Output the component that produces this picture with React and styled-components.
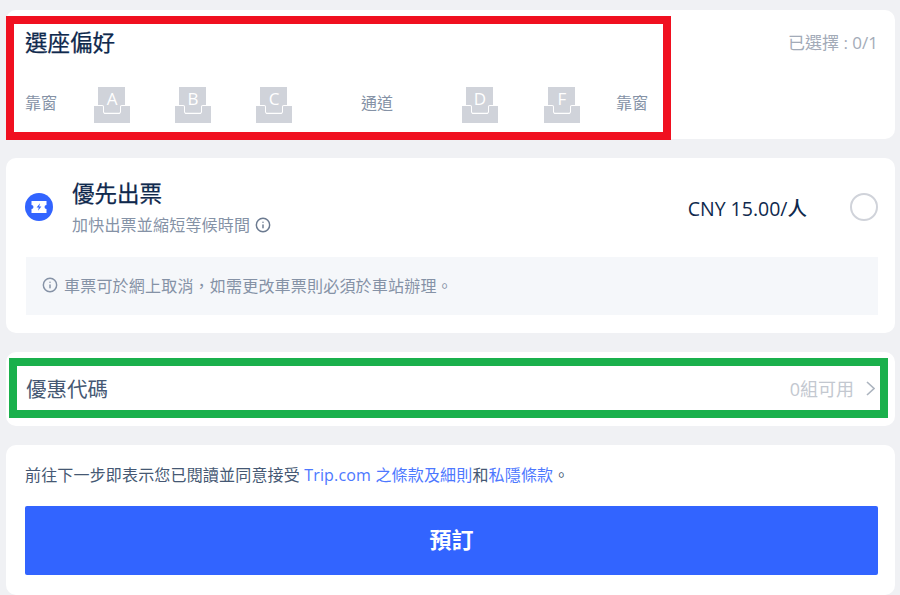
import React from 'react';
import styled, { createGlobalStyle } from 'styled-components';
import { Info } from 'lucide-react';

const GlobalStyle = createGlobalStyle`
  html, body {
    margin: 0;
    padding: 0;
    background: #f0f1f4;
  }
  body {
    font-family: "Open Sans", "Noto Sans CJK TC", sans-serif;
    color: #0f294d;
  }
`

const Page = styled.div`
  position: relative;
  width: 900px;
  height: 595px;
  overflow: hidden;
  padding: 10px 5px 0 6px;
  box-sizing: border-box;
  display: flex;
  flex-direction: column;
`

const Card = styled.section`
  background: #fff;
  border-radius: 10px;
  padding: ${p => p.$padding};
  margin-bottom: ${p => p.$gap || 0}px;
  height: ${p => p.$height}px;
  box-sizing: border-box;
  flex-shrink: 0;
`

const TitleRow = styled.div`
  display: flex;
  justify-content: space-between;
  align-items: center;
  height: 32px;
`

const Title = styled.h2`
  margin: 0;
  font-size: 22.5px;
  font-weight: 400;
  -webkit-text-stroke: 0.25px #0f294d;
  line-height: 32px;
  color: #0f294d;
`

const Counter = styled.span`
  font-size: 17px;
  color: #a3abb8;
  margin-bottom: 3px;
`

const SeatRow = styled.div`
  display: flex;
  align-items: center;
  margin-top: 28px;
  height: 36px;
`

const SeatLabel = styled.span`
  font-size: 16px;
  line-height: 32px;
  width: 32px;
  flex-shrink: 0;
  color: #8592a6;
  margin-right: ${p => p.$after || 0}px;
  margin-bottom: 4px;
`

const SeatBox = styled.div`
  position: relative;
  width: 36px;
  height: 36px;
  flex-shrink: 0;
  margin-right: ${p => p.$after || 0}px;
  svg {
    display: block;
  }
`

const SeatLetter = styled.span`
  position: absolute;
  left: 0;
  right: 0;
  top: 1px;
  text-align: center;
  font-size: 17px;
  line-height: 21px;
  color: #fff;
`

const OfferRow = styled.div`
  display: flex;
  align-items: center;
  height: 72px;
`

const TicketBadge = styled.div`
  width: 28px;
  height: 28px;
  flex-shrink: 0;
  svg {
    display: block;
  }
`

const OfferText = styled.div`
  margin-left: 19px;
  flex: 1;
`

const OfferTitle = styled.div`
  font-size: 22.5px;
  font-weight: 400;
  -webkit-text-stroke: 0.25px #0f294d;
  line-height: 32px;
  color: #0f294d;
`

const OfferSub = styled.div`
  display: flex;
  align-items: center;
  gap: 5px;
  margin-top: 3px;
  font-size: 16px;
  letter-spacing: 0.2px;
  line-height: 24px;
  color: #8592a6;
`

const Price = styled.span`
  font-size: 19.5px;
  font-weight: 500;
  color: #0f294d;
  margin-right: 43px;
`

const Radio = styled.span`
  width: 28px;
  height: 28px;
  box-sizing: border-box;
  border: 2.5px solid #d0d3da;
  border-radius: 50%;
  flex-shrink: 0;
`

const Notice = styled.div`
  display: flex;
  align-items: center;
  gap: 6px;
  margin-top: 14px;
  margin-left: 1px;
  height: 58px;
  padding: 0 0 3px 16px;
  box-sizing: border-box;
  background: #f5f7fa;
  font-size: 16px;
  letter-spacing: 0.2px;
  color: #8592a6;
`

const PromoRow = styled.div`
  display: flex;
  align-items: center;
  justify-content: space-between;
  height: 100%;
  padding-bottom: 2px;
  box-sizing: border-box;
`

const PromoLabel = styled.span`
  font-size: 20.5px;
  color: #455873;
`

const PromoMeta = styled.span`
  display: flex;
  align-items: center;
  gap: 12px;
  font-size: 18px;
  color: #c3c8d0;
  svg {
    display: block;
  }
`

const Terms = styled.p`
  margin: 0;
  font-size: 16px;
  letter-spacing: 0.17px;
  line-height: 24px;
  color: #455873;
`

const TermLink = styled.a`
  color: #4d78ff;
  text-decoration: none;
`

const BookButton = styled.button`
  display: block;
  width: 100%;
  height: 69px;
  margin-top: 19px;
  padding: 0 0 5px;
  border: 0;
  border-radius: 2px;
  background: #3264ff;
  color: #fff;
  font-family: inherit;
  font-size: 22px;
  font-weight: 700;
`

/* annotation frames drawn over the screenshot */
const Frame = styled.div`
  position: absolute;
  left: ${p => p.$left}px;
  top: ${p => p.$top}px;
  width: ${p => p.$width}px;
  height: ${p => p.$height}px;
  box-sizing: border-box;
  border: 8px solid ${p => p.$color};
  pointer-events: none;
`

const Seat = ({ letter, after }) => (
  <SeatBox $after={after}>
    <svg width="36" height="36" viewBox="0 0 36 36">
      <path
        fill="#d0d3da"
        d="M4 0h27v18h-3c-1.4 0-2 .8-2 2v4.4c0 .8-.5 1.3-1.3 1.3H11.3c-.8 0-1.3-.5-1.3-1.3V20c0-1.2-.6-2-2-2H4z"
      />
      <path
        fill="#d0d3da"
        d="M0 19h8c.6 0 1 .4 1 1v4.4c0 1.5 1 2.6 2.3 2.6h13.4c1.3 0 2.3-1.1 2.3-2.6V20c0-.6.4-1 1-1H36v17H0z"
      />
    </svg>
    <SeatLetter>{letter}</SeatLetter>
  </SeatBox>
)

const TicketIcon = () => (
  <svg width="28" height="28" viewBox="0 0 28 28">
    <circle cx="14" cy="14" r="14" fill="#3264ff" />
    <path
      fill="#fff"
      d="M6.5 8h15v4a2 2 0 0 0 0 4v4h-15v-4a2 2 0 0 0 0-4z"
    />
    <path fill="#3264ff" d="M15 10.3l-3.4 4.2h2.2l-.8 3.2 3.4-4.2h-2.2z" />
  </svg>
)

export default function App() {
  return (
    <>
      <GlobalStyle />
      <Page>
        <Card $padding="17px 17px 0 19px" $height={129} $gap={19}>
          <TitleRow>
            <Title>選座偏好</Title>
            <Counter>已選擇 : 0/1</Counter>
          </TitleRow>
          <SeatRow>
            <SeatLabel $after={37}>靠窗</SeatLabel>
            <Seat letter="A" after={45} />
            <Seat letter="B" after={45} />
            <Seat letter="C" after={69} />
            <SeatLabel $after={69}>通道</SeatLabel>
            <Seat letter="D" after={46} />
            <Seat letter="F" after={36} />
            <SeatLabel>靠窗</SeatLabel>
          </SeatRow>
        </Card>

        <Card $padding="13px 17px 0 19px" $height={175} $gap={19}>
          <OfferRow>
            <TicketBadge><TicketIcon /></TicketBadge>
            <OfferText>
              <OfferTitle>優先出票</OfferTitle>
              <OfferSub>
                加快出票並縮短等候時間
                <Info size={16} color="#6b7a90" strokeWidth={2.2} />
              </OfferSub>
            </OfferText>
            <Price>CNY 15.00/人</Price>
            <Radio />
          </OfferRow>
          <Notice>
            <Info size={16} color="#8592a6" strokeWidth={2.2} />
            車票可於網上取消，如需更改車票則必須於車站辦理。
          </Notice>
        </Card>

        <Card $padding="0 20px 0 20px" $height={74} $gap={19}>
          <PromoRow>
            <PromoLabel>優惠代碼</PromoLabel>
            <PromoMeta>
              0組可用
              <svg width="9" height="15" viewBox="0 0 9 15" fill="none">
                <path d="M1 1l7 6.5L1 14" stroke="#acb4bf" strokeWidth="1.6" />
              </svg>
            </PromoMeta>
          </PromoRow>
        </Card>

        <Card $padding="18px 17px 0 19px" $height={150}>
          <Terms>
            前往下一步即表示您已閱讀並同意接受 <TermLink>Trip.com 之條款及細則</TermLink>和<TermLink>私隱條款</TermLink>。
          </Terms>
          <BookButton>預訂</BookButton>
        </Card>

        <Frame $left={6} $top={16} $width={665} $height={124} $color="#f01020" />
        <Frame $left={9} $top={358} $width={879} $height={60} $color="#1ab04c" />
      </Page>
    </>
  )
}
